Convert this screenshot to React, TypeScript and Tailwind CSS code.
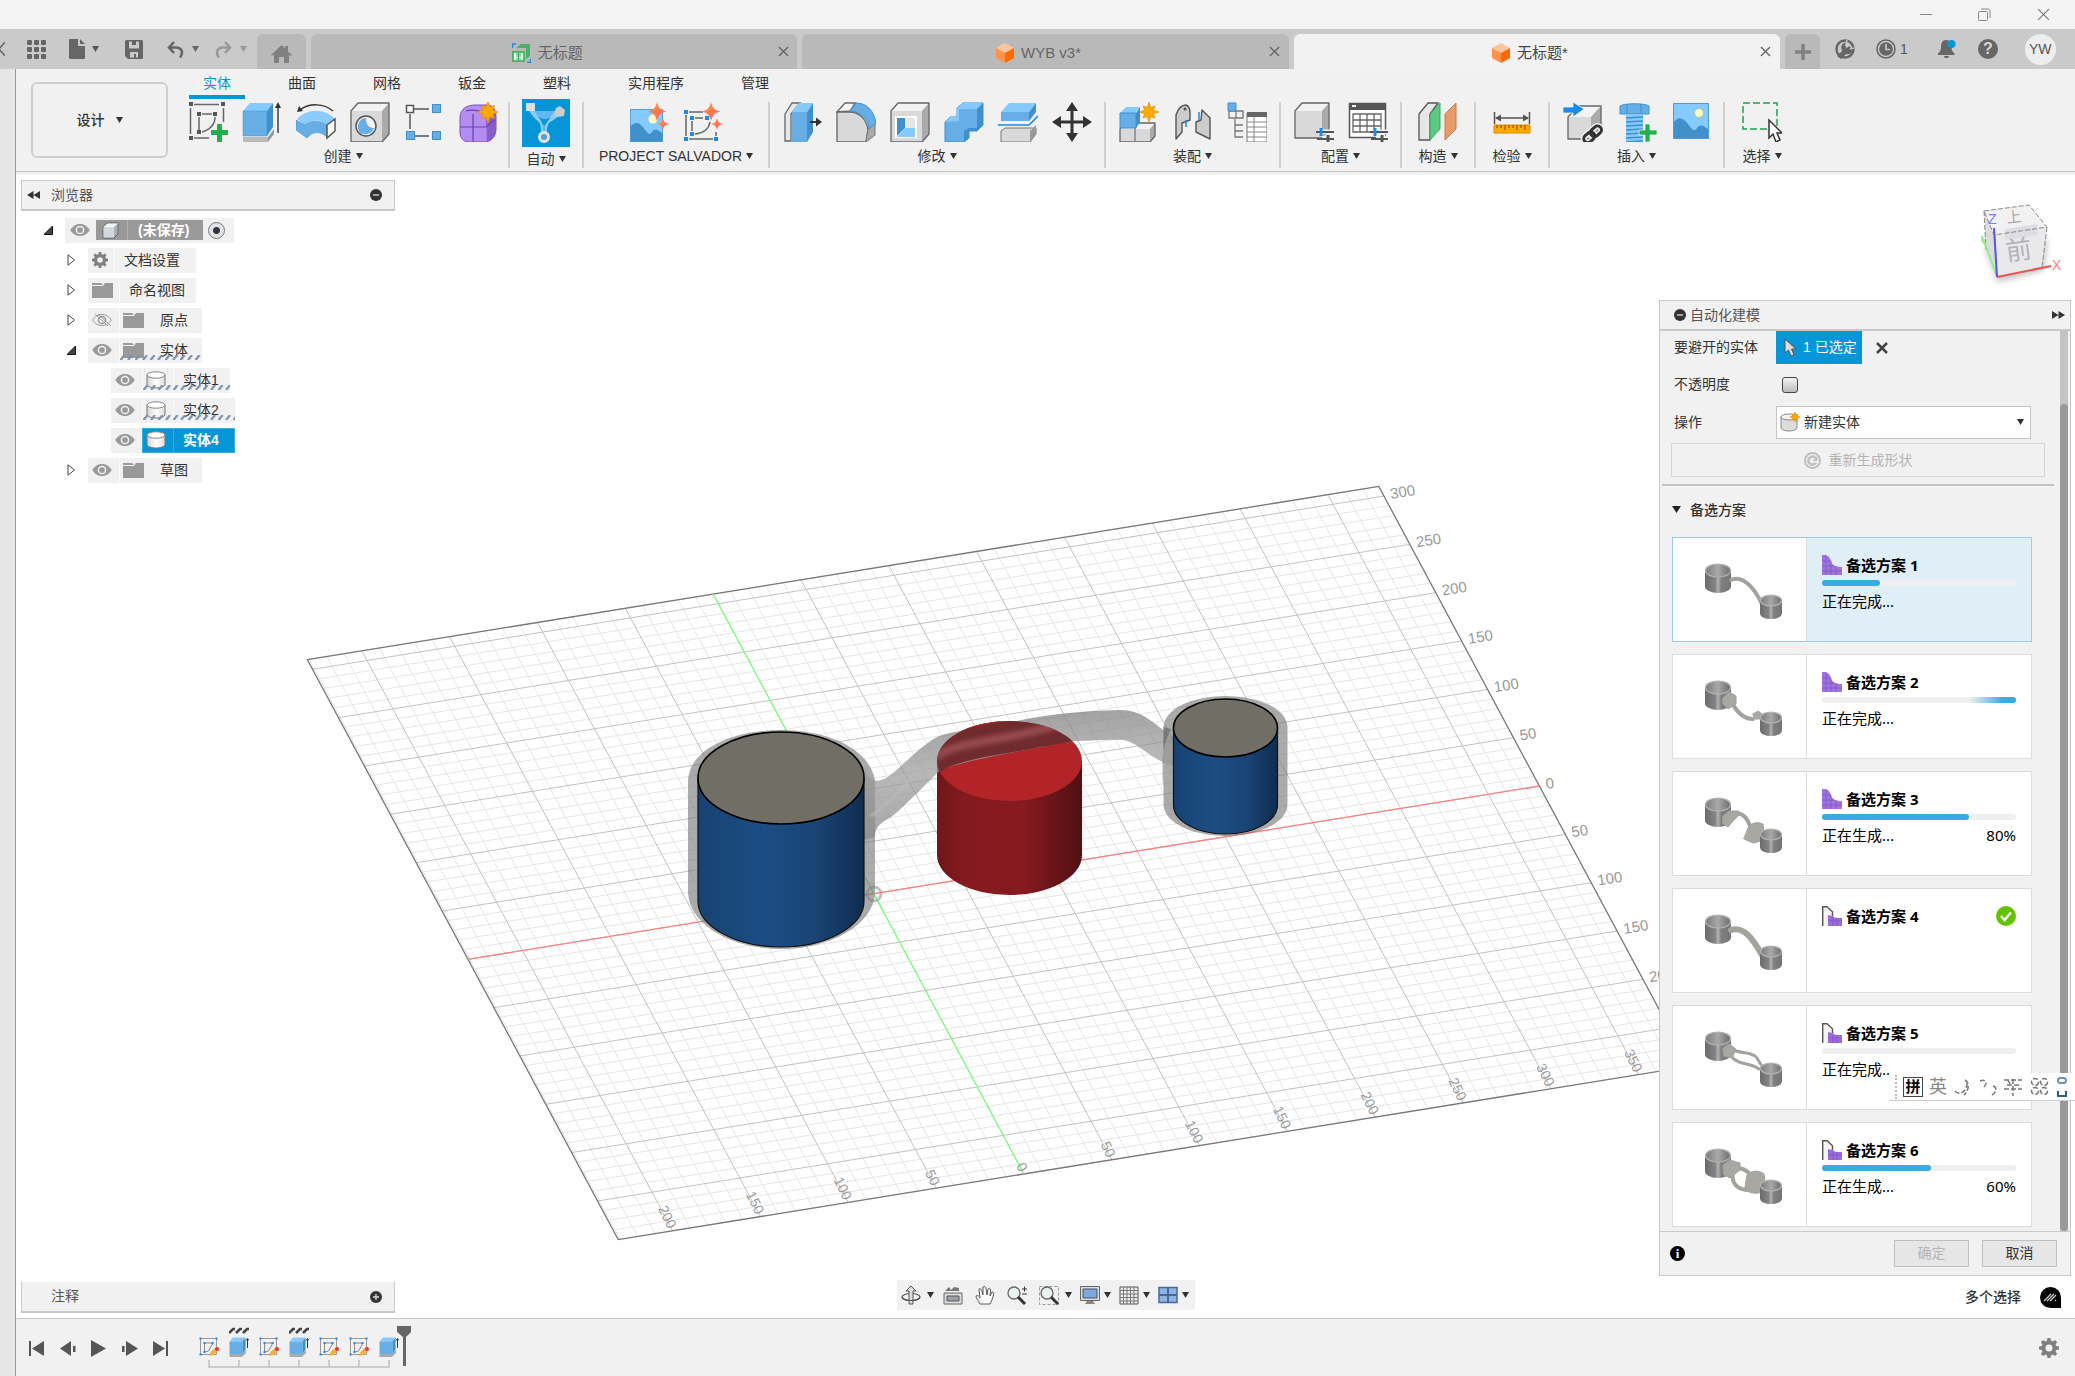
import React from "react";

type Kids = { children?: React.ReactNode };

const Svg = ({ s = 40, className = "", children }: Kids & { s?: number; className?: string }) => (
  <svg width={s} height={s} viewBox="0 0 40 40" fill="none" className={"shrink-0 " + className} aria-hidden="true">
    {children}
  </svg>
);

const Caret = ({ color = "#333" }: { color?: string }) => (
  <svg width="7" height="6" viewBox="0 0 7 6" className="shrink-0" aria-hidden="true">
    <path d="M0 0h7L3.5 6z" fill={color} />
  </svg>
);

/* ---------- ribbon icons ---------- */

const SKETCH_LINES = (
  <>
    <path d="M6 2.500H31M2.500 6V32M35.500 6V20M6 36H21" stroke="#666" strokeWidth="1.500" />
    <path d="M11 15v14M14 12h10M27 15c0 6-3 12-13 15" stroke="#666" strokeWidth="1.500" />
  </>
);

const dots = (pts: number[][], fill: string) =>
  pts.map(([x, y], i) => <rect key={i} x={x - 2} y={y - 2} width="4" height="4" fill={fill} />);

const SketchIcon = () => (
  <Svg>
    {SKETCH_LINES}
    {dots([[3, 2], [35, 2], [3, 36], [11, 12], [27, 12], [11, 30]], "#555")}
    <path d="M29 22h5v6h6v5h-6v7h-5v-7h-6v-5h6z" fill="#22b04b" />
  </Svg>
);

const Star = ({ x = 29, y = 11, r = 10 }: { x?: number; y?: number; r?: number }) => {
  const pts = Array.from({ length: 16 }, (_, i) => {
    const a = (i * Math.PI) / 8 - Math.PI / 2;
    const q = i % 2 ? r * 0.48 : i % 4 ? r * 0.85 : r;
    return `${(x + q * Math.cos(a)).toFixed(1)},${(y + q * Math.sin(a)).toFixed(1)}`;
  });
  return <polygon points={pts.join(" ")} fill="#ffa800" stroke="#e08a00" strokeWidth=".6" />;
};

const Sparkles = () => (
  <g>
    <path d="M28 0c1.500 6 3 8 10 9.500-7 1.500-8.500 3.500-10 9.500-1.500-6-3-8-10-9.500C25 8 26.500 6 28 0z" fill="url(#spark)" />
    <path d="M34 16c1 4 2 5 6 6-4 1-5 2-6 6-1-4-2-5-6-6 4-1 5-2 6-6z" fill="url(#spark)" />
  </g>
);

const ExtrudeIcon = () => (
  <Svg>
    <path d="M1 35h25l6-8v5l-6 8H1z" fill="#999" />
    <path d="M1 35h25v5H1z" fill="#bbb" />
    <path d="M1 9l7-8h23l-6 8z" fill="#85caff" />
    <path d="M1 9h24v25H1z" fill="#67aee6" stroke="#4090cc" strokeWidth=".5" />
    <path d="M25 9l6-8v24l-6 9z" fill="#4090cc" />
    <path d="M36 31V5" stroke="#333" strokeWidth="1.400" />
    <path d="M36 0l3 6h-6z" fill="#333" />
  </Svg>
);

const RevolveIcon = () => (
  <Svg>
    <path d="M4 8c9-7 24-7 33 1" stroke="#333" strokeWidth="1.500" />
    <path d="M1 10l2-6 4 5z" fill="#333" />
    <path d="M1 17c10-11 28-11 38 0l-8 6c-7-6-15-6-22 0z" fill="#8accff" />
    <path d="M0 18l9 5c7-5 14-5 22 0v12c-7-6-14-6-20 1L0 28z" fill="#67aee6" stroke="#4090cc" strokeWidth=".6" />
    <path d="M31 23l8-6v12l-8 7z" fill="#fff" stroke="#555" strokeWidth="1.500" />
  </Svg>
);

const Cube = ({ x = 1, y = 1, w = 38, h = 39, d = 8 }: { x?: number; y?: number; w?: number; h?: number; d?: number }) => (
  <g stroke="#666" strokeWidth="1.300" strokeLinejoin="round">
    <path d={`M${x} ${y + d}l${d - 1} ${-d}h${w - d + 1}l${-d + 1} ${d}z`} fill="#f3f3f3" stroke="none" />
    <path d={`M${x} ${y + d}h${w - d + 1}v${h - d}h${-(w - d + 1)}z`} fill="#d9d9d9" stroke="none" />
    <path d={`M${x + w - d + 1} ${y + d}l${d - 1} ${-d}v${h - d}l${-d + 1} ${d}z`} fill="#aaa" stroke="none" />
    <path d={`M${x} ${y + h}V${y + d}l${d - 1} ${-d}h${w - d + 1}v${h - d}l${-d + 1} ${d}z`} fill="none" />
  </g>
);

const HoleIcon = () => (
  <Svg>
    <Cube />
    <circle cx="16" cy="24" r="10" fill="#f3f3f3" stroke="#555" strokeWidth="1.500" />
    <path d="M16 16c0 8 4 10 8 10-2 8-16 9-16-1 0-5 3-9 8-9z" fill="#67aee6" />
  </Svg>
);

const PatternIcon = () => (
  <Svg>
    <path d="M10 7h15M6 12v15M10 34h15" stroke="#555" strokeWidth="1.500" />
    <rect x="2.500" y="3.500" width="7" height="7" fill="#fff" stroke="#555" strokeWidth="1.500" />
    <g fill="#67aee6" stroke="#4090cc">
      <rect x="28.500" y="2.500" width="8" height="8" />
      <rect x="2.500" y="29.500" width="8" height="8" />
      <rect x="28.500" y="29.500" width="8" height="8" />
    </g>
  </Svg>
);

const FormIcon = () => (
  <Svg>
    <path d="M2 16C2 6 10 3 17 3h12c6 0 9 5 9 12v12c0 8-6 13-12 13H12C5 40 2 36 2 30z" fill="#b58cf0" stroke="#7a4fc0" />
    <path d="M28 12l8-6c2 3 2 8 2 12v10c0 6-4 11-9 12z" fill="#8a5bcb" />
    <path d="M15 12v28M2 25h26l9-7M8 9c6-2 14 0 20 2" stroke="#6b3fb0" strokeWidth="1.200" />
    <Star x={30} y={10} r={11} />
  </Svg>
);

const AutoIcon = () => (
  <svg width="48" height="48" viewBox="0 0 48 48" fill="none" aria-hidden="true">
    <path d="M9 10c4 7 8 11 13 13 6-2 10-5 14-9" stroke="#8fccf8" strokeWidth="5" />
    <path d="M10 12c8 8 11 14 10 22h4c-1-8 3-15 11-22" fill="#5fb8f2" stroke="#8fccf8" strokeWidth="2" />
    <path d="M16 17c4 4 9 4 13 1l-7 9z" fill="#0696d7" />
    <rect x="4" y="4" width="9" height="8" fill="#ddd" />
    <path d="M38 7l5 4-1 6-6 1-4-4 2-5z" fill="#ccc" />
    <circle cx="22" cy="38" r="4.500" fill="#5a9fd0" stroke="#e4e4e4" strokeWidth="3" />
  </svg>
);

const Picture = ({ x = 1, y = 2, w = 36, h = 36, sun = true }: { x?: number; y?: number; w?: number; h?: number; sun?: boolean }) => (
  <svg x={x} y={y} width={w} height={h} viewBox="0 0 36 36">
    <path d="M0 0h36v36H0z" fill="#85caff" />
    <path d="M0 20c5-7 10-6 15 1 4 6 7 8 9 4 3-5 7-2 12 2v9H0z" fill="#4090cc" />
    {sun && <circle cx="26" cy="10" r="4.500" fill="#fff8c0" stroke="#a9c79a" />}
    <path d="M.5.5h35v35H.5z" fill="none" stroke="#4c9cd9" />
  </svg>
);

const SalvadorImage = () => (
  <Svg>
    <Picture x={1} y={7} w={33} h={33} sun={false} />
    <circle cx="24" cy="17" r="4.500" fill="#fff8c0" />
    <Sparkles />
  </Svg>
);

const SalvadorSketch = () => (
  <Svg>
    <path d="M6 10h14M3 13v21M6 37h24M33 30v4" stroke="#666" strokeWidth="1.500" />
    <path d="M9 19v10M12 16h8M27 20c-1 6-5 11-15 12" stroke="#666" strokeWidth="1.500" />
    {dots([[3, 10], [3, 37], [33, 37], [9, 16], [24, 16], [9, 32]], "#1a8be8")}
    <Sparkles />
  </Svg>
);

const PressPull = () => (
  <Svg>
    <path d="M3 12L10 1h8L9 12v27H3z" fill="#e6e6e6" stroke="#666" strokeWidth="1.300" />
    <path d="M10 10l7-9h14l-6 9z" fill="#85caff" />
    <path d="M10 10h15v30H10z" fill="#67aee6" />
    <path d="M25 10l6-9v29l-6 10z" fill="#4090cc" />
    <path d="M28 20h8" stroke="#333" strokeWidth="2" />
    <path d="M34 15.500l6 4.500-6 4.500z" fill="#333" />
  </Svg>
);

const FilletIcon = () => (
  <Svg>
    <path d="M1 10L9 1h10L14 9z" fill="#f8f8f8" stroke="#666" strokeWidth="1.300" />
    <path d="M1 10h13c10 0 16 8 18 17l-2 13H1z" fill="#d9d9d9" stroke="#666" strokeWidth="1.300" />
    <path d="M32 27l7-6v12l-9 7z" fill="#aaa" stroke="#777" />
    <path d="M14 9l6-8c11 0 18 8 20 20l-7 6C32 17 25 10 14 9z" fill="#67aee6" stroke="#4090cc" />
  </Svg>
);

const ShellIcon = () => (
  <Svg>
    <Cube />
    <path d="M5 14h22v22H5z" fill="#fff" />
    <path d="M7 16h8v10L7 34z" fill="#4090cc" />
    <path d="M15 16h10v10H15z" fill="#e6e6e6" />
    <path d="M15 26h10v9H7z" fill="#85caff" />
  </Svg>
);

const CombineIcon = () => (
  <Svg>
    <path d="M1 20l5-5h7V6l6-5h20v22l-6 6h-8v7l-5 4H1z" fill="#67aee6" stroke="#4090cc" />
    <path d="M1 20l5-5h7V6l6-5h20l-6 6H15v12z" fill="#85caff" />
    <path d="M33 7l6-6v22l-6 6h-8v7l-5 4V29l5-3h8z" fill="#4090cc" />
  </Svg>
);

const SplitIcon = () => (
  <Svg>
    <path d="M3 29l4-3h31v6l-6 8H3z" fill="#d9d9d9" stroke="#777" />
    <path d="M32 29l6-6v9l-6 8z" fill="#999" />
    <path d="M3 10l8-9h27l-7 9z" fill="#85caff" />
    <path d="M3 10h28v9H3z" fill="#67aee6" />
    <path d="M31 10l7-9v9l-7 9z" fill="#4090cc" />
    <path d="M0 23h31l9-9" stroke="#1a8be8" strokeWidth="1.600" />
  </Svg>
);

const MoveIcon = () => (
  <Svg>
    <path d="M20 8v24M8 20h24" stroke="#333" strokeWidth="3" />
    <path d="M20 0l6 9H14zM20 40l6-9H14zM0 20l9-6v12zM40 20l-9-6v12z" fill="#333" />
  </Svg>
);

const ComponentIcon = () => (
  <Svg>
    <Cube x={1} y={21} w={35} h={19} d={6} />
    <path d="M16 26v14" stroke="#777" strokeWidth="1.300" />
    <path d="M1 11l6-6h14l-5 6z" fill="#85caff" />
    <path d="M1 11h16v15H1z" fill="#67aee6" stroke="#4090cc" />
    <path d="M17 11l4-6v15l-4 6z" fill="#4090cc" />
    <Star x={30} y={10} r={10} />
  </Svg>
);

const JointIcon = () => (
  <Svg>
    <g fill="#ccc" stroke="#555" strokeWidth="1.400" strokeLinejoin="round">
      <path d="M3 37V13C5 7 8 3 13 3c3 1 4 4 4 8v7l-8 3v9z" />
      <path d="M23 20l5-2 1-10 8 8v21L23 30z" />
    </g>
    <circle cx="12" cy="7" r="1.500" fill="#555" />
    <path d="M13 18v7M26 10v8" stroke="#1a8be8" strokeWidth="1.500" />
  </Svg>
);

const TableTreeIcon = () => (
  <Svg>
    <path d="M2 9h14v7H2zM9 9v7M8 17v18h8M8 23h8M8 29h8" stroke="#777" strokeWidth="1.300" />
    <path d="M1 1h8v8H1z" fill="#67aee6" stroke="#4090cc" />
    <path d="M20 11h20v29H20z" fill="#fff" stroke="#777" />
    <path d="M20 10h20v5H20z" fill="#666" />
    <path d="M20 20h20M20 25h20M20 30h20M20 35h20M27 15v25" stroke="#888" />
  </Svg>
);

const PlusPair = () => (
  <>
    <path d="M24 30h16M28 36h12" stroke="#f1f1f1" strokeWidth="5" />
    <path d="M22 30h18M23 37h17" stroke="#555" strokeWidth="2" />
    <path d="M27 26v8" stroke="#1a8be8" strokeWidth="3" />
    <path d="M34 33v7" stroke="#555" strokeWidth="3" />
  </>
);

const ConfigCube = () => (
  <Svg>
    <Cube x={1} y={1} w={34} h={35} />
    <PlusPair />
  </Svg>
);

const ConfigTable = () => (
  <Svg>
    <path d="M1.500 1.500h36v34h-36z" fill="#fff" stroke="#555" strokeWidth="1.500" />
    <path d="M1 1h37v7H1z" fill="#555" />
    <path d="M4 3h4v2H4z" fill="#fff" />
    <path d="M5 12h28v18H5zM5 18h28M5 24h28M12 12v18M19 12v18M26 12v18" stroke="#666" strokeWidth="1.300" />
    <PlusPair />
  </Svg>
);

const PlaneIcon = () => (
  <Svg>
    <path d="M1 12l9-11h10l-8 11v26H1z" fill="#e6e6e6" stroke="#555" strokeWidth="1.300" />
    <path d="M12 12L22 1v26L12 38z" fill="#5cc982" stroke="#3aa763" />
    <path d="M27 12L38 1v26L27 38z" fill="#e69b68" stroke="#cc7a45" />
  </Svg>
);

const MeasureIcon = () => (
  <Svg>
    <path d="M2.500 10v12M37.500 10v12M4 16h32" stroke="#555" strokeWidth="1.500" />
    <path d="M3 16l6-3.500v7zM37 16l-6-3.500v7z" fill="#555" />
    <path d="M2 23h36v8H2z" fill="#ffa800" stroke="#e08a00" />
    <path d="M5 23v3M9 23v3M13 23v5M17 23v3M21 23v3M25 23v5M29 23v3M33 23v5" stroke="#7a4a00" />
  </Svg>
);

const InsertLink = () => (
  <Svg>
    <Cube x={5} y={4} w={33} h={33} d={11} />
    <path d="M0 5h10V0l11 7-11 8v-4H0z" fill="#1a8be8" stroke="#f1f1f1" strokeWidth=".8" />
    <g transform="rotate(-42 30 32)" stroke="#f1f1f1" strokeWidth="6">
      <rect x="19" y="28" width="12" height="8" rx="4" />
      <rect x="28" y="28" width="12" height="8" rx="4" />
    </g>
    <g transform="rotate(-42 30 32)" stroke="#333" strokeWidth="3">
      <rect x="19" y="28" width="12" height="8" rx="4" />
      <rect x="28" y="28" width="12" height="8" rx="4" />
    </g>
  </Svg>
);

const BoltIcon = () => (
  <Svg>
    <path d="M3 4c4-3 25-3 29 0v8H3z" fill="#67aee6" stroke="#4090cc" />
    <path d="M10 2v10M24 2v10" stroke="#4090cc" />
    <path d="M9 13h17v27H9z" fill="#85caff" />
    <path d="M9 16l17-1M9 20l17-1M9 24l17-1M9 28l17-1M9 32l17-1M9 36l17-1M9 40l17-1" stroke="#4090cc" strokeWidth="1.500" />
    <path d="M28 22h5v6h7v5h-7v7h-5v-7h-6v-5h6z" fill="#22b04b" stroke="#f1f1f1" strokeWidth=".8" />
  </Svg>
);

const InsertImage = () => (
  <Svg>
    <Picture x={2} y={1} w={36} h={36} />
  </Svg>
);

const SelectIcon = () => (
  <Svg>
    <path d="M1 1h34v26H1z" stroke="#22a04b" strokeWidth="1.500" strokeDasharray="7 3" />
    <path d="M27 18v18l4-4 3 8 4-2-3-7h5z" fill="#fff" stroke="#333" strokeWidth="1.500" />
  </Svg>
);

/* ---------- ribbon ---------- */

const GROUPS: { name: string; width: string; icons: React.FC[]; active?: boolean }[] = [
  { name: "创建", width: "w-[332px]", icons: [SketchIcon, ExtrudeIcon, RevolveIcon, HoleIcon, PatternIcon, FormIcon] },
  { name: "自动", width: "w-[74px]", icons: [AutoIcon], active: true },
  { name: "PROJECT SALVADOR", width: "w-[186px]", icons: [SalvadorImage, SalvadorSketch] },
  { name: "修改", width: "w-[336px]", icons: [PressPull, FilletIcon, ShellIcon, CombineIcon, SplitIcon, MoveIcon] },
  { name: "装配", width: "w-[175px]", icons: [ComponentIcon, JointIcon, TableTreeIcon] },
  { name: "配置", width: "w-[121px]", icons: [ConfigCube, ConfigTable] },
  { name: "构造", width: "w-[74px]", icons: [PlaneIcon] },
  { name: "检验", width: "w-[74px]", icons: [MeasureIcon] },
  { name: "插入", width: "w-[175px]", icons: [InsertLink, BoltIcon, InsertImage] },
  { name: "选择", width: "w-[74px]", icons: [SelectIcon] },
];

const Ribbon = () => (
  <section className="flex h-[106px] shrink-0 border-b-[3px] border-[#f1f1f1] bg-[#f1f1f1]">
    <div className="flex w-full border-b border-[#c6c6c6] pl-[15px]">
      <button className="mt-[13px] flex h-[76px] w-[137px] shrink-0 items-center justify-center gap-[11px] rounded-md border-2 border-[#cfcfcf] text-[14px] font-medium text-[#333]">
        设计 <Caret />
      </button>
      <div className="flex flex-col pl-2.5">
        <nav className="flex h-[30px] gap-[29px] pl-[11px]">
          {["实体", "曲面", "网格", "钣金", "塑料", "实用程序", "管理"].map((t, i) => (
            <button
              key={t}
              className={
                i === 0
                  ? "border-b-4 border-[#0696d7] px-3.5 pt-[2px] text-[14px] leading-6 text-[#0696d7]"
                  : "border-b-4 border-transparent px-3.5 pt-[2px] text-[14px] leading-6 text-[#333]"
              }
            >
              {t}
            </button>
          ))}
        </nav>
        <div className="flex pt-[3px]">
          {GROUPS.map((g, gi) => (
            <div
              key={g.name}
              className={`flex h-[66px] flex-col items-center ${g.width} ${gi < GROUPS.length - 1 ? "border-r-2 border-[#d0d0d0]" : ""}`}
            >
              <div className="-mt-[3px] flex h-12 justify-center">
                {g.icons.map((I, i) => (
                  <button key={i} aria-label={`${g.name} ${i + 1}`} className={`flex items-center justify-center ${g.active ? "w-12 bg-[#0696d7]" : "w-[54px]"}`}>
                    <I />
                  </button>
                ))}
              </div>
              <button className="flex items-center gap-1 whitespace-nowrap text-[14px] leading-6 text-[#333]">
                {g.name} <Caret />
              </button>
            </div>
          ))}
        </div>
      </div>
    </div>
  </section>
);

/* ---------- title and tab bars ---------- */

const OrangeCube = () => (
  <svg width="18" height="20" viewBox="0 0 18 20" aria-hidden="true">
    <path d="M9 0l9 5-9 5-9-5z" fill="#ffc59a" />
    <path d="M0 5l9 5v10l-9-5z" fill="#ff924a" />
    <path d="M18 5l-9 5v10l9-5z" fill="#ff6a00" />
  </svg>
);

const GreenDoc = () => (
  <svg width="19" height="20" viewBox="0 0 19 20" fill="none" aria-hidden="true">
    <path d="M4 5l5-4h9v12l-4 3V5z" fill="#4caf6a" />
    <path d="M1 9h11v9H1z" fill="#fff" stroke="#22b04b" strokeWidth="1.500" />
    <path d="M4 11h5M4 13h5M4 16h5M6.500 10v7" stroke="#22b04b" />
    <path d="M.5 5V1H4M15 19.500h3.500V16" stroke="#1a8be8" strokeWidth="1.500" />
  </svg>
);

const Cross = ({ s = 11, w = 1.5, c = "#666" }: { s?: number; w?: number; c?: string }) => (
  <svg width={s} height={s} viewBox="0 0 12 12" aria-hidden="true">
    <path d="M1 1l10 10M11 1L1 11" stroke={c} strokeWidth={w} />
  </svg>
);

const DocTab = ({ icon, name, active }: { icon: React.ReactNode; name: string; active?: boolean }) => (
  <div className={`flex h-[35px] flex-1 items-center rounded-t-md pl-3.5 text-[15px] ${active ? "bg-[#f2f2f2] text-[#444]" : "bg-[#b9b9b9] text-[#666]"}`}>
    <button className="flex flex-1 items-center justify-center gap-[7px] pt-[3px]">
      {icon}
      {name}
    </button>
    <button aria-label="关闭选项卡" className="flex w-7 justify-center">
      <Cross />
    </button>
  </div>
);

const TitleBar = () => (
  <div className="flex h-[29px] shrink-0 items-center justify-end gap-[46px] bg-[#f3f3f3] pr-[25px]">
    <button aria-label="最小化" className="flex w-3 justify-center">
      <svg width="12" height="2"><path d="M0 .5h12" stroke="#888" /></svg>
    </button>
    <button aria-label="还原">
      <svg width="13" height="13" fill="none" stroke="#888">
        <rect x="0.500" y="3.500" width="9" height="9" rx="1" />
        <path d="M3 1h7c1.500 0 2 .8 2 2v7" />
      </svg>
    </button>
    <button aria-label="关闭"><Cross s={13} w={1} c="#777" /></button>
  </div>
);

const UndoArrow = ({ flip, color }: { flip?: boolean; color: string }) => (
  <svg width="17" height="17" viewBox="0 0 17 17" fill="none" aria-hidden="true">
    <g transform={flip ? "matrix(-1 0 0 1 17 0)" : undefined}>
      <path d="M7 1L2 6.500 7 12M2.500 6.500H9c4 0 6 2.500 6 5 0 2-.8 3.500-2 5" stroke={color} strokeWidth="2.600" />
    </g>
  </svg>
);

const TabBar = () => (
  <div className="flex h-10 shrink-0 items-end bg-[#cacaca]">
    <div className="flex h-10 w-[257px] shrink-0 items-center">
      <svg width="5" height="16" fill="none"><path d="M5 1L-1 8l6 7" stroke="#666" strokeWidth="1.500" /></svg>
      <button aria-label="数据面板" className="ml-[22px]">
        <svg width="19" height="19" fill="#666">
          {[0, 7, 14].map((y) => [0, 7, 14].map((x) => <rect key={x + "-" + y} x={x} y={y} width="5" height="5" rx="1" />))}
        </svg>
      </button>
      <button aria-label="文件" className="ml-[23px] flex items-center gap-[7px]">
        <svg width="16" height="20" fill="#666"><path d="M1 0h8v7h7v12a1 1 0 01-1 1H1a1 1 0 01-1-1V1a1 1 0 011-1zM11 0l5 5h-5z" /></svg>
        <Caret color="#555" />
      </button>
      <button aria-label="保存" className="ml-[26px]">
        <svg width="18" height="19" fill="none">
          <path d="M0 1.500A1.500 1.500 0 011.500 0h15A1.500 1.500 0 0118 1.500v16a1.500 1.500 0 01-1.500 1.500H3l-3-3z" fill="#666" />
          <path d="M4 1.500h10v7H4zM5 12h8v5.500H5z" fill="#cacaca" />
          <path d="M7 0h4v5H7zM9 14h2v4H9z" fill="#666" />
        </svg>
      </button>
      <button aria-label="撤消" className="ml-6 flex items-center gap-2"><UndoArrow color="#666" /><Caret color="#666" /></button>
      <button aria-label="重做" className="ml-4 flex items-center gap-2"><UndoArrow flip color="#999" /><Caret color="#999" /></button>
    </div>
    <button aria-label="主页" className="mr-[5px] flex h-[35px] w-[49px] shrink-0 items-center justify-center rounded-t-md bg-[#b9b9b9] pt-1">
      <svg width="21" height="18" viewBox="0 0 21 18" fill="#808080"><path d="M0 10L10.500 0 14 3.500V1h3v5.500l4 3.500-1 1-2-1.500V18h-5v-6H8v6H3V9.500L1 11z" /></svg>
    </button>
    <div className="flex min-w-0 flex-1 gap-[5px]">
      <DocTab icon={<GreenDoc />} name="无标题" />
      <DocTab icon={<OrangeCube />} name="WYB v3*" />
      <DocTab icon={<OrangeCube />} name="无标题*" active />
    </div>
    <button aria-label="新建" className="ml-[5px] flex h-[35px] w-[35px] shrink-0 items-center justify-center rounded-t-md bg-[#b9b9b9]">
      <svg width="16" height="16"><path d="M8 0v16M0 8h16" stroke="#808080" strokeWidth="3.500" /></svg>
    </button>
    <div className="flex h-10 w-[255px] shrink-0 items-center pl-[15px] text-[14px] text-[#555]">
      <button aria-label="扩展">
        <svg width="20" height="20" viewBox="0 0 20 20" fill="none">
          <circle cx="10" cy="10" r="8.500" stroke="#666" strokeWidth="2.500" />
          <path d="M2 17l5-5c-2-4 0-8 4-9l-1 4 2 2 2-2 2 2 3-1c0 5-4 8-8 7l-5 5z" fill="#666" />
          <path d="M12 1l-1 4M19 9l-4 1M3 12l4-1" stroke="#cacaca" strokeWidth="1.500" />
        </svg>
      </button>
      <button aria-label="作业状态" className="ml-[21px] flex items-center gap-1">
        <svg width="20" height="20" viewBox="0 0 20 20" fill="none">
          <circle cx="10" cy="10" r="9" stroke="#666" strokeWidth="1.500" />
          <circle cx="10" cy="10" r="6.800" fill="#666" />
          <path d="M10 5v5.500h4" stroke="#cacaca" strokeWidth="1.600" />
        </svg>
        1
      </button>
      <button aria-label="通知" className="ml-[30px]">
        <svg width="18" height="20" viewBox="0 0 18 20">
          <path d="M8 1c4 0 5.500 3 5.500 7 0 3 1 5 3 6.500V16H0v-1.500C2 13 3 11 3 8c0-4 1.500-7 5-7zM6 17h5c-.5 3-4.500 3-5 0z" fill="#666" />
          <circle cx="13.500" cy="5" r="4" fill="#0696d7" />
        </svg>
      </button>
      <button aria-label="帮助" className="ml-[22px] flex h-5 w-5 items-center justify-center rounded-full bg-[#666] text-[16px] leading-5 font-bold text-[#d6d6d6]">?</button>
      <button className="ml-[27px] flex h-[31px] w-[31px] items-center justify-center rounded-full bg-[#eee] text-[14px] text-[#555]">YW</button>
    </div>
  </div>
);

/* ---------- 3D scene ---------- */

const P = (x: number, y: number): [number, number] => [873.75 + x * 1.7564 - y * 0.518, 893.7 - x * 0.2841 - y * 0.9666];
const X0 = -231, X1 = 379, Y0 = -290, Y1 = 310;

const line = (a: [number, number], b: [number, number]) => `M${a[0].toFixed(1)} ${a[1].toFixed(1)}L${b[0].toFixed(1)} ${b[1].toFixed(1)}`;

const gridPath = (major: boolean) => {
  let d = "";
  for (let x = -230; x <= X1; x += 10) if ((x % 50 === 0) === major) d += line(P(x, Y0), P(x, Y1));
  for (let y = Y0; y <= Y1; y += 10) if ((y % 50 === 0) === major) d += line(P(X0, y), P(X1, y));
  return d;
};

const Scene = () => {
  const c = [P(X0, Y1), P(X1, Y1), P(X1, Y0), P(X0, Y0)].map((p) => p.map((n) => n.toFixed(1)).join(",")).join(" ");
  return (
    <svg viewBox="16 175 2059 1143" preserveAspectRatio="xMidYMid slice" className="absolute inset-0 h-full w-full" role="img" aria-label="模型视图">
      <defs>
        <linearGradient id="blue">
          <stop offset="0" stopColor="#174372" />
          <stop offset=".4" stopColor="#1c4d84" />
          <stop offset=".7" stopColor="#194575" />
          <stop offset="1" stopColor="#102c50" />
        </linearGradient>
        <linearGradient id="red">
          <stop offset="0" stopColor="#6f171b" />
          <stop offset=".2" stopColor="#841a1f" />
          <stop offset=".6" stopColor="#851a1f" />
          <stop offset="1" stopColor="#511013" />
        </linearGradient>
        <linearGradient id="tube" x1="0" y1="0" x2=".2" y2="1">
          <stop offset="0" stopColor="#777" stopOpacity=".75" />
          <stop offset=".5" stopColor="#999" stopOpacity=".7" />
          <stop offset="1" stopColor="#888" stopOpacity=".75" />
        </linearGradient>
        <linearGradient id="spark" x1="0" y1="0" x2="1" y2="1">
          <stop offset="0" stopColor="#ffa347" />
          <stop offset=".5" stopColor="#ff7a45" />
          <stop offset="1" stopColor="#ff4fc0" />
        </linearGradient>
        <filter id="glow" x="-20%" y="-60%" width="140%" height="220%"><feGaussianBlur stdDeviation="2.500" /></filter>
        <clipPath id="redtop">
          <ellipse cx="1009.500" cy="761" rx="72.500" ry="40" />
        </clipPath>
      </defs>
      <path d={gridPath(false)} stroke="#e6e6e6" />
      <path d={gridPath(true)} stroke="#c2c2c2" />
      <polygon points={c} fill="none" stroke="#777" strokeWidth="1.300" />
      <path d={line(P(X0, 0), P(X1, 0))} stroke="#ff8080" strokeWidth="1.300" />
      <path d={line(P(0, Y0), P(0, Y1))} stroke="#7dff7d" strokeWidth="1.300" />
      <g fontSize="15" fill="#999" fontFamily="Liberation Sans">
        {[300, 250, 200, 150, 100, 50, 0, -50, -100, -150, -200].map((v) => {
          const [x, y] = P(X1 + 4, v);
          return <text key={v} transform={`translate(${x} ${y + 4}) rotate(-9)`}>{Math.abs(v)}</text>;
        })}
      </g>
      <g fontSize="14" fill="#999" fontFamily="Liberation Sans" textAnchor="end">
        {[-200, -150, -100, -50, 0, 50, 100, 150, 200, 250, 300, 350].map((v) => {
          const [x, y] = P(v - 2, Y0 + 2);
          return <text key={v} transform={`translate(${x} ${y}) rotate(64)`}>{Math.abs(v)}</text>;
        })}
      </g>

      <path d={line(P(0, -20), P(0, 5))} stroke="#7dff7d" strokeWidth="1.300" />
      <circle cx="874" cy="894" r="7" fill="none" stroke="#999" strokeOpacity=".6" strokeWidth="3" />
      <path d="M688 780C690 748 735 730 781 730s88 18 94 50V893c-2 34-48 56-94 56s-91-22-93-56z" fill="#777" fillOpacity=".62" />
      <path d="M1163.500 727c1-20 32-31 62-31s61 11 62 31v77c0 20-32 32-62 32s-62-12-62-32z" fill="#777" fillOpacity=".62" />

      <path d="M937 761v94a72.500 40 0 00145 0v-94z" fill="url(#red)" />
      <ellipse cx="1009.500" cy="761" rx="72.500" ry="40" fill="#b32428" />

      <g transform="translate(660 660) scale(.42088 .33333)">
        <path
          d="M485 330C502 372 520 366 540 352C580 316 612 262 660 230C700 210 760 205 850 182C930 162 1010 152 1090 150C1150 150 1170 190 1220 232V318C1160 296 1140 248 1100 240C1060 238 1040 242 985 243C900 264 720 300 665 332C630 372 590 430 550 470C520 492 512 500 511 530L485 540Z"
          fill="url(#tube)"
        />
        <path d="M500 470C540 430 570 400 600 350" stroke="#bbb" strokeWidth="10" strokeOpacity=".5" fill="none" />
      </g>
      <g clipPath="url(#redtop)">
        <path d="M930 715h160v23c-12 2-10 1-16 3-18 4-30 5-44 8s-36 6-50 9-30 7-40 14h-10z" fill="#702b2e" />
        <path d="M934 758c22-18 72-16 126-34" stroke="#a05257" strokeWidth="8" fill="none" opacity=".85" filter="url(#glow)" />
        <path d="M965 729c12-6 26-8 38-8-10 3-24 4-38 8z" fill="#b32428" />
      </g>
      <path d="M1163.500 727v60c-2-15-2-45 8-58z" fill="#555" opacity=".5" />

      <path d="M698 779v122a83 46 0 00166 0V779z" fill="url(#blue)" stroke="#111" strokeWidth="1.200" />
      <path d="M699 781a83 46 0 00164 0" stroke="#0f56b8" strokeWidth="3" fill="none" />
      <ellipse cx="781" cy="778" rx="83" ry="46" fill="#716e66" stroke="#000" strokeWidth="1.600" />
      <path d="M1173.500 728v77a52 29 0 00104 0v-77z" fill="url(#blue)" stroke="#111" strokeWidth="1.200" />
      <path d="M1174 731a52 29 0 00103 0" stroke="#0f56b8" strokeWidth="3" fill="none" />
      <ellipse cx="1225.500" cy="728" rx="52" ry="29" fill="#716e66" stroke="#000" strokeWidth="1.600" />
    </svg>
  );
};

const ViewCube = () => (
  <svg width="98" height="100" viewBox="1972 195 98 100" fill="none" className="self-end" role="img" aria-label="视图立方体">
    <defs>
      <filter id="soft"><feGaussianBlur stdDeviation="3" /></filter>
    </defs>
    <path d="M1984 248l13 34 46-12 3-30z" fill="#999" opacity=".6" filter="url(#soft)" />
    <path d="M1983 211l45-6 18 22-53 8z" fill="#f1f1f2" />
    <path d="M1983 211l10 24 3 42-11-27z" fill="#dcdcde" />
    <path d="M1993 235l53-8-5 40-45 10z" fill="#e9e9eb" />
    <path d="M2004 229l32-5v11l-32 5z" fill="#dcdee4" />
    <path d="M1983 211l45-6 18 22-53 8zM2046 227l-5 40M1983 211l2 39" stroke="#888" strokeDasharray="5 2" />
    <text x="2006" y="223" fontSize="15" fill="#aaa" fontFamily="Noto Sans CJK SC" transform="rotate(-6 2006 223)">上</text>
    <text x="2006" y="261" fontSize="26" fill="#b4b4b8" fontFamily="Noto Sans CJK SC" transform="rotate(-8 2006 261)">前</text>
    <path d="M1981 236l15 40" stroke="#8df08d" strokeWidth="2" />
    <path d="M1993 228l3 49" stroke="#5555e8" strokeWidth="2" />
    <path d="M1996 277l54-11" stroke="#e85555" strokeWidth="2" />
    <text x="1987" y="224" fontSize="14" fill="#7a7af5" fontFamily="Liberation Sans">Z</text>
    <text x="2051" y="270" fontSize="14" fill="#ff8080" fontFamily="Liberation Sans">X</text>
    <path d="M1981 236v5l4 4" stroke="#8df08d" strokeWidth="1.500" />
  </svg>
);

/* ---------- browser tree ---------- */

const Eye = ({ off }: { off?: boolean }) => (
  <svg width="20" height="14" viewBox="0 0 20 14" fill="none" className="shrink-0" aria-hidden="true">
    <path d="M.7 7C5-.5 15-.5 19.300 7 15 14.500 5 14.500.7 7z" fill={off ? "none" : "#999"} stroke="#999" />
    <circle cx="10" cy="7" r="3.600" fill={off ? "none" : "#999"} stroke={off ? "#999" : "#f1f1f1"} strokeWidth="1.500" />
    {off && <path d="M3 1l13 12M6 1l13 12" stroke="#999" />}
  </svg>
);

const Folder = () => (
  <svg width="21" height="17" viewBox="0 0 21 17" className="shrink-0" aria-hidden="true">
    <path d="M0 1h9l2 2H0zM0 4h11l2-3h8v15H0z" fill="#999" />
  </svg>
);

const gearPath =
  "M10 0l1.500.1.6 2.700 1.500.6L16 1.900l2.100 2.100-1.500 2.400.6 1.500 2.800.6v3l-2.800.6-.6 1.500 1.500 2.400L16 18.100l-2.400-1.500-1.500.6-.6 2.800h-3l-.6-2.800-1.500-.6L4 18.100 1.900 16l1.500-2.400-.6-1.500L0 11.500v-3l2.800-.6.6-1.500L1.900 4 4 1.900l2.400 1.500 1.500-.6L8.500.1zM10 6.500a3.500 3.500 0 100 7 3.500 3.500 0 000-7z";
const Gear = ({ s = 16 }: { s?: number }) => (
  <svg width={s} height={s} viewBox="0 0 20 20" className="shrink-0" aria-hidden="true">
    <path d={gearPath} fill="#808080" fillRule="evenodd" />
  </svg>
);

const Cylinder = () => (
  <svg width="20" height="18" viewBox="0 0 20 18" className="shrink-0" aria-hidden="true">
    <defs>
      <linearGradient id="cyl">
        <stop offset="0" stopColor="#d4d4d4" />
        <stop offset=".5" stopColor="#fff" />
        <stop offset="1" stopColor="#ddd" />
      </linearGradient>
    </defs>
    <path d="M1 4v10c2 4 16 4 18 0V4z" fill="url(#cyl)" stroke="#777" />
    <ellipse cx="10" cy="4" rx="9" ry="3.200" fill="#fff" stroke="#888" />
  </svg>
);

const Hash = () => (
  <svg width="100%" height="5" className="absolute bottom-[3px] left-0" aria-hidden="true">
    <defs>
      <pattern id="hash" width="7.500" height="5" patternUnits="userSpaceOnUse">
        <path d="M1 4.500L4 .8" stroke="#7c8fb0" strokeWidth="2.200" strokeLinecap="round" />
      </pattern>
    </defs>
    <rect width="100%" height="5" fill="url(#hash)" />
  </svg>
);

const Twisty = ({ open }: { open?: boolean }) => (
  <button aria-label={open ? "折叠" : "展开"} className="mr-3 flex w-[9px] shrink-0 justify-center">
    {open ? (
      <svg width="9" height="9"><path d="M0 8.500L8.500 0v8.500z" fill="#444" stroke="#111" /></svg>
    ) : (
      <svg width="9" height="12" fill="#fff"><path d="M1 .8L7.500 6 1 11.200z" stroke="#444" /></svg>
    )}
  </button>
);

const Cell = ({ children, className = "", tone = "bg-[#f1f1f1]" }: Kids & { className?: string; tone?: string }) => (
  <span className={`flex h-[25px] items-center ${tone} ${className}`}>{children}</span>
);

const Collapse = ({ plus }: { plus?: boolean }) => (
  <svg width="12" height="12" viewBox="0 0 12 12" className="shrink-0" aria-hidden="true">
    <circle cx="6" cy="6" r="6" fill="#333" />
    <path d={plus ? "M3 6h6M6 3v6" : "M3 6h6"} stroke="#ddd" strokeWidth="1.300" />
  </svg>
);

const BrowserTree = () => {
  const row = "flex h-[30px] items-center";
  return (
    <ul className="pt-1 text-[14px] text-[#333]">
      <li className={row + " pl-[23px]"}>
        <Twisty open />
        <Cell className="w-[31px] justify-center pr-0.5"><Eye /></Cell>
        <Cell className="pr-[9px]">
          <span className="flex h-5 items-center bg-[#999] text-white">
            <span className="flex h-5 w-8 items-center justify-center border-r border-[#b0b0b0] pr-0.5">
              <svg width="17" height="17" viewBox="0 0 17 17">
                <path d="M1 5l4-4h11v11l-4 4H1z" fill="#aab0ba" stroke="#666" />
                <path d="M1.500 5l4-3.500H16L12 5z" fill="#f4f4f4" />
                <path d="M1.500 5H12v10.500H1.500z" fill="#d3d8e0" />
              </svg>
            </span>
            <b className="pr-3.5 pl-2.5 leading-5">(未保存)</b>
          </span>
          <input type="radio" name="active" defaultChecked aria-label="激活" className="ml-[5px] h-[17px] w-[17px] appearance-none rounded-full border border-[#777] bg-[radial-gradient(circle,#333_0_3px,#dfe4ec_4px)]" />
        </Cell>
      </li>
      <li className={row + " pl-[46px]"}>
        <Twisty />
        <Cell className="w-[26px] pl-1"><Gear /></Cell>
        <Cell className="w-[82px] border-l border-[#fafafa] pl-[9px]">文档设置</Cell>
      </li>
      <li className={row + " pl-[46px]"}>
        <Twisty />
        <Cell className="w-[31px] pl-1"><Folder /></Cell>
        <Cell className="w-[77px] border-l border-[#fafafa] pl-[9px]">命名视图</Cell>
      </li>
      {[
        { n: "原点", off: true },
        { n: "实体", open: true },
      ].map((r) => (
        <li key={r.n} className={row + " pl-[46px]"}>
          <Twisty open={r.open} />
          <Cell className="w-[31px] pl-1"><Eye off={r.off} /></Cell>
          <Cell className="relative w-[83px] gap-4 border-l border-[#fafafa] pl-[3px]">
            <Folder />
            {r.n}
            {r.open && <Hash />}
          </Cell>
        </li>
      ))}
      {["实体1", "实体2", "实体4"].map((n, i) => (
        <li key={n} className={row + " pl-[90px]"}>
          <Cell className="w-[31px] pl-1"><Eye /></Cell>
          <Cell
            tone={i === 2 ? "bg-[#0696d7]" : "bg-[#f1f1f1]"}
            className={
              i === 2
                ? "relative w-[93px] border border-[#38abdf] font-bold text-white"
                : i === 1
                  ? "relative w-[93px] border-l border-[#fafafa]"
                  : "relative w-[88px] border-l border-[#fafafa]"
            }
          >
            <span className={i === 2 ? "flex h-full w-[31px] items-center border-r border-[#38abdf] pl-[3px]" : "flex h-full w-[31px] items-center border-r border-[#fafafa] pl-[3px]"}>
              <Cylinder />
            </span>
            <span className="pl-[9px]">{n}</span>
            {i < 2 && <Hash />}
          </Cell>
        </li>
      ))}
      <li className={row + " pl-[46px]"}>
        <Twisty />
        <Cell className="w-[31px] pl-1"><Eye /></Cell>
        <Cell className="w-[83px] gap-4 border-l border-[#fafafa] pl-[3px]"><Folder />草图</Cell>
      </li>
    </ul>
  );
};

/* ---------- automated modeling panel ---------- */

const Pot = ({ x, y, w, h }: { x: number; y: number; w: number; h: number }) => {
  const r = w / 2, e = r * 0.5;
  return (
    <g>
      <path d={`M${x} ${y + e}v${h - 2 * e}a${r} ${e} 0 00${w} 0v${-(h - 2 * e)}z`} fill="url(#metal)" />
      <ellipse cx={x + r} cy={y + e} rx={r - 0.5} ry={e} fill="url(#metalin)" stroke="#b4b3ae" strokeWidth="1.200" />
    </g>
  );
};

const ARMS: React.ReactNode[] = [
  <path d="M58 42c12-5 23 8 31 24" strokeWidth="4" />,
  <>
    <path d="M58 46c6 12 14 18 22 18" strokeWidth="4" />
    <path d="M50 43l6-6 7 4v8l-8 5-5-5zM80 59l5-3 4 3v5h-7z" fill="#a8a7a2" strokeWidth="1" />
  </>,
  <>
    <path d="M60 42c10-2 14 4 17 12" strokeWidth="4" />
    <path d="M50 44l6-5h10v4l-6 6-5 6-5-3zM76 54c4-4 10-4 14-2l1 8-3 9-8 2-9-4z" fill="#a8a7a2" strokeWidth="1" />
  </>,
  <path d="M58 41c13-4 22 9 31 25" strokeWidth="6" />,
  <>
    <path d="M60 44c10 4 20 2 24 8l6 10M58 50c8 10 18 6 28 13" strokeWidth="3" />
    <path d="M50 42l6-4 7 5-4 9-8-2z" fill="#a8a7a2" strokeWidth="1" />
  </>,
  <>
    <path d="M60 50c-2 10 4 16 14 17M62 44c8 2 12 3 16 8" strokeWidth="4" />
    <path d="M50 42l7-5 10 3v7l-10 8-6-3zM74 52c4-5 12-5 17-1l1 8-3 10c-8 3-16 0-17-4z" fill="#a8a7a2" strokeWidth="1" />
  </>,
];

const Thumb = ({ i }: { i: number }) => (
  <svg width="133" height="103" viewBox="0 0 133 103" fill="none" className="block" aria-hidden="true">
    <defs>
      <linearGradient id="metal">
        <stop offset="0" stopColor="#6b6b6b" />
        <stop offset=".4" stopColor="#858585" />
        <stop offset=".5" stopColor="#b5b5b8" />
        <stop offset=".62" stopColor="#808080" />
        <stop offset="1" stopColor="#747474" />
      </linearGradient>
      <linearGradient id="metalin">
        <stop offset="0" stopColor="#7c7c7c" />
        <stop offset=".5" stopColor="#a8a8a8" />
        <stop offset="1" stopColor="#6c6c6c" />
      </linearGradient>
    </defs>
    <Pot x={32} y={26} w={26} h={29} />
    <g stroke="#a3a29d" strokeLinecap="round" strokeLinejoin="round">{ARMS[i]}</g>
    <Pot x={87} y={57} w={22} h={24} />
  </svg>
);

const ShapeIcon = ({ half }: { half?: boolean }) => (
  <svg width="20" height="20" viewBox="0 0 20 20" fill="none" className="shrink-0" aria-hidden="true">
    {half ? (
      <>
        <path d="M.7 20V.7H5l6 5V20z" fill="#f4f4f4" />
        <path d="M.7 20V.7H5l5.500 5V10" stroke="#555" strokeWidth="1.400" />
        <path d="M6 20V9l4 1c2 2 5 2 10 2v8z" fill="#9a6dd8" />
        <path d="M11 10v10M15 12v8M6 15h14" stroke="#8357c6" strokeWidth=".8" />
      </>
    ) : (
      <>
        <path d="M0 0h3c4 1 6 4 6 7 2 4 6 5 11 5v8H0z" fill="#9f74dc" />
        <path d="M4 0v20M9 6v14M14 11v9M0 6h9M0 11h12M0 16h20" stroke="#8357c6" strokeWidth=".8" />
      </>
    )}
  </svg>
);

const ALTS: { state?: string; pct?: number; from?: string; width?: number; done?: boolean; h?: boolean }[] = [
  { state: "正在完成...", width: 30 },
  { state: "正在完成...", from: "right", width: 24 },
  { state: "正在生成...", pct: 80, width: 76 },
  { done: true, h: true },
  { state: "正在完成...", width: 0, h: true },
  { state: "正在生成...", pct: 60, width: 56, h: true },
];

const AltCard = ({ i }: { i: number }) => {
  const a = ALTS[i];
  const sel = i === 0;
  return (
    <li className={`flex h-[105px] border ${sel ? "border-[#9ccde6] bg-[#e0eef6]" : "border-[#dcdcdc] bg-white"}`}>
      <div className="w-[134px] shrink-0 border-r border-[#dcdcdc] bg-white">
        <Thumb i={i} />
      </div>
      <div className="flex-1 px-[15px] pt-4 text-[15px] text-black">
        <div className="flex h-[22px] items-center gap-1 font-bold">
          <ShapeIcon half={a.h} />
          备选方案 {i + 1}
          {a.done && (
            <svg width="20" height="20" className="ml-auto" role="img" aria-label="完成">
              <circle cx="10" cy="10" r="10" fill="#62c400" />
              <path d="M5 10l3.500 4L15 6.500" stroke="#fff" strokeWidth="2.500" fill="none" />
            </svg>
          )}
        </div>
        {a.state && (
          <>
            <div role="progressbar" aria-label={`备选方案 ${i + 1}`} aria-valuenow={a.pct} className="mt-1 flex h-1.5 overflow-hidden rounded-sm bg-[#efefef]">
              <div
                className={a.from ? "ml-auto h-full bg-linear-to-r from-[#efefef] to-[#38abdf] to-70%" : "h-full rounded-r-sm bg-[#38abdf]"}
                style={{ width: `${a.width}%` }}
              />
            </div>
            <div className="flex justify-between pt-1 leading-[22px]">
              <span>{a.state}</span>
              {a.pct && <span>{a.pct}%</span>}
            </div>
          </>
        )}
      </div>
    </li>
  );
};

const Cursor = () => (
  <svg width="13" height="19" viewBox="0 0 13 19" aria-hidden="true">
    <path d="M1 1v14l3.500-3 2.500 6 3-1.300-2.500-5.700H12z" fill="#ddd" stroke="#555" />
  </svg>
);

const Panel = () => (
  <section className="flex w-[412px] flex-col border border-[#c8c8c8] bg-[#f1f1f1] text-[14px] text-[#333]">
    <header className="flex h-[30px] items-center gap-1 border-b-2 border-[#c8c8c8] pr-[5px] pl-[14px] text-[#555]">
      <button aria-label="折叠"><Collapse /></button>
      <h2 className="flex-1">自动化建模</h2>
      <button aria-label="停靠">
        <svg width="13" height="8"><path d="M0 0l6.500 4L0 8zM6.500 0L13 4 6.500 8z" fill="#333" /></svg>
      </button>
    </header>
    <div className="flex flex-1">
      <div className="flex-1 pl-[2px]">
        <div className="flex h-[33px] items-center pl-3">
          <span className="w-[102px]">要避开的实体</span>
          <button className="flex h-[33px] w-[86px] items-center gap-1.5 bg-[#0696d7] pl-2 text-white"><Cursor />1 已选定</button>
          <button aria-label="清除" className="ml-[14px]"><Cross s={12} w={2.5} c="#444" /></button>
        </div>
        <div className="mt-1 flex h-[33px] items-center pl-3">
          <label htmlFor="opacity" className="w-[108px]">不透明度</label>
          <input id="opacity" type="checkbox" className="h-4 w-4 appearance-none rounded-[3px] border border-[#444] bg-linear-to-b from-[#f4f4f4] to-[#bbb]" />
        </div>
        <div className="mt-1 flex h-[34px] items-center pl-3">
          <label htmlFor="op" className="w-[102px]">操作</label>
          <div className="relative flex items-center">
            <select id="op" className="h-[33px] w-[255px] appearance-none border border-[#c4c4c4] bg-white pl-[27px] text-[14px]">
              <option>新建实体</option>
            </select>
            <svg width="20" height="20" viewBox="0 0 20 20" className="pointer-events-none absolute left-1" aria-hidden="true">
              <path d="M1 5v11c2 4 14 4 16 0V5z" fill="#ddd" stroke="#888" />
              <ellipse cx="9" cy="5" rx="8" ry="3" fill="#f4f4f4" stroke="#888" />
              <Star x={15} y={5} r={5} />
            </svg>
            <span className="pointer-events-none absolute right-[7px]"><Caret /></span>
          </div>
        </div>
        <button disabled className="mt-1 ml-[9px] flex h-[34px] w-[374px] items-center justify-center gap-2 border border-[#d4d4d4] text-[#b4b4b4]">
          <svg width="17" height="17" viewBox="0 0 17 17" fill="none">
            <circle cx="8.500" cy="8.500" r="7.500" fill="#f1f1f1" stroke="#c0c0c0" strokeWidth="2" />
            <path d="M11.500 6A4 4 0 1012 10.500" stroke="#c0c0c0" strokeWidth="2.500" />
            <path d="M13.500 4v5h-5z" fill="#c0c0c0" />
          </svg>
          重新生成形状
        </button>
        <div className="mt-[7px] h-0.5 w-[392px] bg-[#c4c4c4]" />
        <button className="mt-2.5 ml-2.5 flex h-7 items-center gap-[9px] font-medium">
          <svg width="9" height="8"><path d="M0 0h9L4.500 7z" fill="#222" /></svg>
          备选方案
        </button>
        <ul className="mt-[13px] ml-2.5 flex w-[360px] flex-col gap-3 pb-1 font-['Noto_Sans','Noto_Sans_CJK_SC',sans-serif]">
          {ALTS.map((_, i) => <AltCard key={i} i={i} />)}
        </ul>
      </div>
      <div className="mr-[2px] w-2 bg-[#c2c3c6] pt-[73px]">
        <div className="h-full rounded-full bg-[#98999b]" />
      </div>
    </div>
    <footer className="flex h-11 items-center gap-[13px] border-t border-[#c8c8c8] pr-[13px] pl-2.5">
      <button aria-label="信息" className="mr-auto flex h-[15px] w-[15px] items-center justify-center rounded-full bg-black font-['Liberation_Serif',serif] text-[13px] leading-none font-bold text-white">i</button>
      <button disabled className="h-[27px] w-[75px] border border-[#c0c0c0] bg-[#e6e6e6] text-[#b4b4b4]">确定</button>
      <button className="h-[27px] w-[75px] border border-[#c0c0c0] bg-[#e6e6e6]">取消</button>
    </footer>
  </section>
);

const Ime = () => (
  <div className="absolute right-0 bottom-[217px] flex h-7 w-[186px] items-center gap-1.5 overflow-hidden border-b border-[#ccc] bg-white pl-1.5 text-[18px] text-[#888]">
    <span className="h-6 border-l-2 border-dotted border-[#bbb]" />
    <span className="flex h-5 w-5 shrink-0 items-center justify-center border border-[#444] text-[15px] leading-none font-bold text-black">拼</span>
    <span className="leading-none">英</span>
    <svg width="98" height="20" viewBox="0 0 98 20" fill="none" stroke="#777" strokeWidth="1.500" strokeDasharray="5 2" className="shrink-0">
      <path d="M2 14c4 5 13 1 12-10M12 3c5 3 4 10-1 15M27 4c7-3 8 5 2 7M40 9c4 1 4 6-1 9" />
      <path d="M51 3h18M54 8h13M51 12h18M60 2v17M55 3l2 4" />
      <circle cx="82" cy="5" r="3.500" /><circle cx="91" cy="5" r="3.500" /><circle cx="82" cy="14" r="3.500" /><circle cx="91" cy="14" r="3.500" />
    </svg>
    <svg width="10" height="20" fill="none" className="shrink-0">
      <rect x="1" y="1" width="8" height="5" rx="2.500" stroke="#6b8fb5" strokeWidth="2" />
      <path d="M1 14v5h8v-5" stroke="#345c8c" strokeWidth="2" />
    </svg>
  </div>
);

/* ---------- navigation bar and timeline ---------- */

const NAV: { label: string; space: string; caret?: boolean; art: React.ReactNode }[] = [
  { label: "动态观察", space: "gap-1.5 mr-[9px]", caret: true, art: <><ellipse cx="10" cy="12" rx="9" ry="3.500" stroke="#555" strokeWidth="1.200" /><path d="M8 19V6H5l5-5 5 5h-3v13z" fill="#ddd" stroke="#555" /><path d="M1 12c1 3 5 3.500 9 3.500s8-.5 9-3.500" stroke="#555" strokeWidth="1.200" /></> },
  { label: "观察", space: "mr-3", art: <><path d="M1 8h18v11H1z" fill="#ddd" stroke="#666" /><path d="M4 11h12v5H4z" fill="#9a9fa8" stroke="#555" /><path d="M2 6l4-4 2 3 3-3 5 1v3" fill="#777" /></> },
  { label: "平移", space: "mr-3", art: <path d="M5 19C3 15 1 13 1 11c2-1 3 0 4 2L4 4c2-1 3 1 3 3l1 3V2c2-1 3 0 3 2l1 6 1-6c2-1 3 0 2.500 2L15 11l2-4c2 0 2 1 1.500 3-1 4-2 6-3.500 9z" fill="#fff" stroke="#555" /> },
  { label: "缩放", space: "mr-3", art: <><circle cx="7" cy="8" r="6" fill="#e8f4f2" stroke="#666" strokeWidth="1.300" /><path d="M11 12l7 7" stroke="#333" strokeWidth="3" /><path d="M15 4h5M17.500 1.500v5M15 9h5" stroke="#333" /></> },
  { label: "窗口缩放", space: "gap-1.5 mr-2", caret: true, art: <><path d="M.5 1.500h19v18H.5z" stroke="#999" strokeDasharray="3 2" /><circle cx="8" cy="8" r="6" fill="#e8f4f2" stroke="#666" strokeWidth="1.300" /><path d="M12 12l7 7" stroke="#333" strokeWidth="3" /></> },
  { label: "显示设置", space: "gap-1 mr-2", caret: true, art: <><path d="M.5 1.500h19v14H.5z" fill="#ddd" stroke="#666" /><path d="M3 4h14v9H3z" fill="#7fa9dc" stroke="#456" /><path d="M7 16h6l2 3H5z" fill="#888" /></> },
  { label: "栅格和捕捉", space: "gap-1 mr-2", caret: true, art: <><path d="M1 2h18v17H1z" fill="#eee" stroke="#555" /><path d="M4.500 2v17M8 2v17M11.500 2v17M15 2v17M1 5.500h18M1 9h18M1 12.500h18M1 16h18" stroke="#777" /></> },
  { label: "视口", space: "gap-1", caret: true, art: <><path d="M1 2.500h18v15H1z" fill="#8fb4e0" stroke="#456a9a" strokeWidth="1.500" /><path d="M10 2v16M1 10h18" stroke="#456a9a" strokeWidth="2" /></> },
];

const NavBar = () => (
  <div className="absolute bottom-2 left-1/2 flex h-[30px] -translate-x-1/2 items-center bg-[#f1f1f1] pr-1.5 pl-1">
    {NAV.map((n) => (
      <button key={n.label} aria-label={n.label} className={`flex items-center ${n.space}`}>
        <svg width="20" height="20" viewBox="0 0 20 20" fill="none" className="shrink-0" aria-hidden="true">{n.art}</svg>
        {n.caret && <Caret />}
      </button>
    ))}
  </div>
);

const TL = ["s", "e", "s", "e", "s", "s", "e"];

const TRANSPORT = [
  ["转到开头", "M0 0h2v15H0zM15 0v15L3 7.500z"],
  ["上一步", "M11 0v15L0 7.500zM13 5h2.500v6H13z"],
  ["播放", "M0-1l15 8.500L0 16z"],
  ["下一步", "M4 0v15l12-7.500zM0 5h2.500v6H0z"],
  ["转到结尾", "M0 0v15l12-7.500zM13 0h2v15h-2z"],
];

const Timeline = () => (
  <footer className="flex h-[58px] shrink-0 items-center border-t border-[#c8c8c8] bg-[#f1f1f1] pr-4 pl-[13px]">
    <div className="flex gap-4 pt-0.5">
      {TRANSPORT.map(([l, d]) => (
        <button key={l} aria-label={l}>
          <svg width="15" height="16" className="overflow-visible"><path d={d} fill="#555" /></svg>
        </button>
      ))}
    </div>
    <div className="ml-[26px] flex">
      {TL.map((t, i) => (
        <button key={i} aria-label={`特征 ${i + 1}`} className="flex w-[30px] flex-col items-center">
          <svg width="20" height="8" aria-hidden="true">
            {(i === 1 || i === 3) && <path d="M0 7l4-4h2M7 7l4-4h2M14 7l4-4h2" stroke="#444" strokeWidth="2.500" fill="none" />}
          </svg>
          <span className="my-[3px]">
            {t === "s" ? (
              <Svg s={20}>
                <path d="M3 3h32v32H3z" stroke="#999" strokeWidth="2" />
                <path d="M11 12v18l8-2 9-16z" stroke="#888" strokeWidth="2" />
                {dots([[3, 3], [35, 3], [3, 35], [11, 12], [27, 12], [11, 30]], "#1a8be8")}
                <path d="M20 38l3-8 10-9 6 6-10 9z" fill="#f5b041" />
                <circle cx="36" cy="24" r="4" fill="#e33" />
              </Svg>
            ) : (
              <Svg s={20}>
                <path d="M1 34h25l8-8v6l-8 8H1z" fill="#aaa" />
                <path d="M1 9l7-8h25l-6 8z" fill="#85caff" />
                <path d="M1 9h26v25H1z" fill="#67aee6" />
                <path d="M27 9l6-8v24l-6 9z" fill="#4090cc" />
                <path d="M37 22V4M34 7l3-4 3 4" stroke="#333" strokeWidth="2" />
              </Svg>
            )}
          </span>
          <svg width="30" height="9" aria-hidden="true">
            <path d={i === 0 ? "M15 0v7h15" : i === 6 ? "M0 7h15V0" : "M0 7h30M15 0v7"} stroke="#ccc" strokeWidth="2" fill="none" />
          </svg>
        </button>
      ))}
      <svg width="16" height="40" className="-ml-2" aria-hidden="true">
        <path d="M1 0h14v6l-5 5v29H7V11L1 6z" fill="#666" />
      </svg>
    </div>
    <button aria-label="设置" className="ml-auto"><Gear s={20} /></button>
  </footer>
);

/* ---------- page ---------- */

export default function App() {
  return (
    <div className="flex min-h-screen flex-col bg-white font-['Liberation_Sans','Noto_Sans_CJK_SC',sans-serif]" lang="zh-CN">
      <TitleBar />
      <TabBar />
      <div className="flex flex-1">
        <div className="w-4 shrink-0 border-r border-[#999] bg-[#e6e6e6]" />
        <div className="flex min-w-0 flex-1 flex-col">
          <Ribbon />
          <main className="relative flex flex-1 justify-between overflow-hidden">
            <Scene />
            <div className="relative flex w-[379px] flex-col justify-between pt-[5px] pb-[5px] pl-[5px]">
              <aside>
                <header className="flex h-[31px] items-center border border-b-2 border-[#c8c8c8] bg-[#f1f1f1] pr-3 pl-[5px] text-[14px] text-[#555]">
                  <button aria-label="停靠">
                    <svg width="13" height="8"><path d="M6.500 0v8L0 4zM13 0v8L6.500 4z" fill="#333" /></svg>
                  </button>
                  <h2 className="ml-[11px] flex-1">浏览器</h2>
                  <button aria-label="折叠"><Collapse /></button>
                </header>
                <BrowserTree />
              </aside>
              <header className="flex h-[31px] items-center border-x border-b-2 border-[#c8c8c8] bg-[#f1f1f1] pr-3 pl-[29px] text-[14px] text-[#555]">
                <h2 className="flex-1">注释</h2>
                <button aria-label="展开"><Collapse plus /></button>
              </header>
            </div>
            <div className="relative flex w-[416px] flex-col pt-5 pr-1">
              <ViewCube />
              <div className="mt-[5px] flex flex-1 flex-col">
                <Panel />
                <div className="flex flex-1 items-center justify-end gap-[19px] pr-2.5 text-[14px] font-medium text-[#333]">
                  多个选择
                  <button aria-label="通知中心">
                    <svg width="21" height="21"><path d="M10.500 0A10.500 10.500 0 0121 10.500V21H10.500a10.500 10.500 0 010-21z" fill="#000" /><path d="M4 14l7-7M7 14l7-7M10 14l6-6M15 14l1-1" stroke="#ccc" strokeWidth="1.300" /></svg>
                  </button>
                </div>
              </div>
            </div>
            <Ime />
            <NavBar />
          </main>
          <Timeline />
        </div>
      </div>
    </div>
  );
}
